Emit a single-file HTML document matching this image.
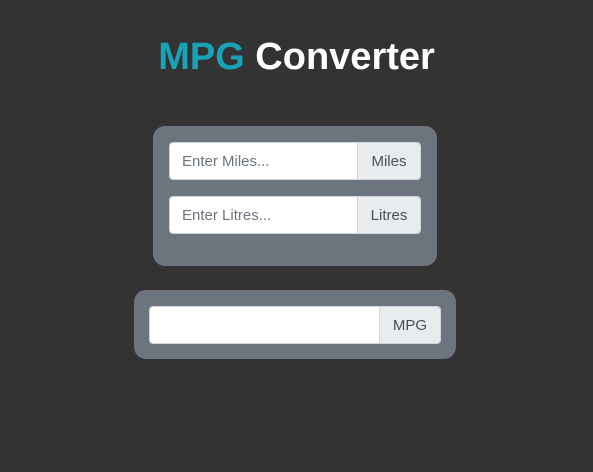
<!DOCTYPE html>
<html><head><style>
body{margin:0;background:#333;width:593px;height:472px;font-family:"Liberation Sans",sans-serif;position:relative;overflow:hidden}
h1{position:absolute;top:31px;left:0;width:593px;text-align:center;margin:0;font-size:38px;font-weight:bold;color:#fff;line-height:52px}
h1 span{color:#17a2b8}
.card{position:absolute;background:#6c757d;border-radius:12px}
.grp{position:absolute;height:38px;display:flex;border-radius:4px;overflow:hidden;border:1px solid #ced4da;box-sizing:border-box}
.in{flex:1;background:#fff;color:#6c757d;font-size:15px;line-height:38px;padding-left:12px}
.ad{background:#e9ecef;color:#495057;font-size:15px;line-height:38px;padding:0 12px;border-left:1px solid #ced4da;text-align:center}
</style></head><body>
<h1><span>MPG</span> Converter</h1>
<div class="card" style="left:153px;top:126px;width:284px;height:140px"></div>
<div class="grp" style="left:169px;top:142px;width:252px"><div class="in">Enter Miles...</div><div class="ad" style="width:38px">Miles</div></div>
<div class="grp" style="left:169px;top:196px;width:252px"><div class="in">Enter Litres...</div><div class="ad" style="width:38px">Litres</div></div>
<div class="card" style="left:134px;top:290px;width:322px;height:69px"></div>
<div class="grp" style="left:149px;top:306px;width:292px"><div class="in"></div><div class="ad" style="width:36px">MPG</div></div>
</body></html>
